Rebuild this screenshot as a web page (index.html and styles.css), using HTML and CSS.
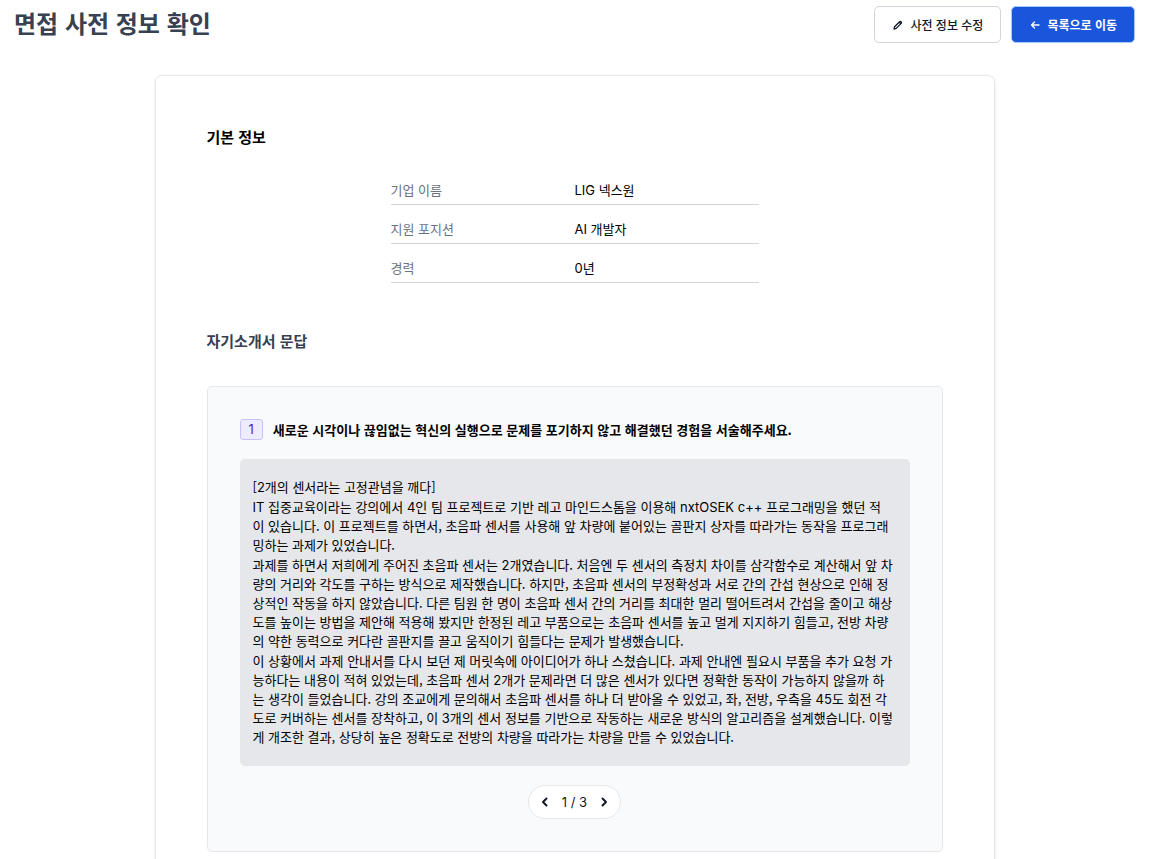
FILE: index.html
```html
<!DOCTYPE html>
<html lang="ko">
<head>
<meta charset="utf-8">
<meta name="viewport" content="width=device-width, initial-scale=1">
<title>면접 사전 정보 확인</title>
<link rel="stylesheet" href="styles.css">
</head>
<body>
<header class="page-header">
  <h1 class="page-title">면접 사전 정보 확인</h1>
  <div class="actions">
    <button type="button" class="btn btn-light">
      <svg class="btn-icon" viewBox="0 0 12 12" aria-hidden="true"><path d="M2 10l.6-2.200 5-5c.5-.5 1.200-.5 1.600 0s.5 1.100 0 1.600l-5 5z M7.200 3.200l1.600 1.600"/></svg>
      사전 정보 수정
    </button>
    <button type="button" class="btn btn-primary">
      <svg class="btn-icon" viewBox="0 0 12 12" aria-hidden="true"><path d="M10 6H2.500M5.500 3L2.500 6l3 3"/></svg>
      목록으로 이동
    </button>
  </div>
</header>
<main class="card">
  <section>
    <h2 class="section-title section-title-dark">기본 정보</h2>
    <table class="info">
      <tbody>
        <tr><th scope="row">기업 이름</th><td><span class="latin">LIG</span> 넥스원</td></tr>
        <tr><th scope="row">지원 포지션</th><td><span class="latin">AI</span> 개발자</td></tr>
        <tr><th scope="row">경력</th><td><span class="latin">0</span>년</td></tr>
      </tbody>
    </table>
  </section>
  <section>
    <h2 class="section-title">자기소개서 문답</h2>
    <article class="qa">
      <div class="question">
        <span class="number">1</span>
        <h3 class="question-text">새로운 시각이나 끊임없는 혁신의 실행으로 문제를 포기하지 않고 해결했던 경험을 서술해주세요.</h3>
      </div>
      <div class="answer">
        <p>[<span class="latin">2</span>개의 센서라는 고정관념을 깨다]</p>
        <p><span class="latin">IT</span> 집중교육이라는 강의에서 <span class="latin">4</span>인 팀 프로젝트로 기반 레고 마인드스톰을 이용해 <span class="latin">nxtOSEK c++</span> 프로그래밍을 했던 적<br>이 있습니다. 이 프로젝트를 하면서, 초음파 센서를 사용해 앞 차량에 붙어있는 골판지 상자를 따라가는 동작을 프로그래<br>밍하는 과제가 있었습니다.</p>
        <p>과제를 하면서 저희에게 주어진 초음파 센서는 <span class="latin">2</span>개였습니다. 처음엔 두 센서의 측정치 차이를 삼각함수로 계산해서 앞 차<br>량의 거리와 각도를 구하는 방식으로 제작했습니다. 하지만, 초음파 센서의 부정확성과 서로 간의 간섭 현상으로 인해 정<br>상적인 작동을 하지 않았습니다. 다른 팀원 한 명이 초음파 센서 간의 거리를 최대한 멀리 떨어트려서 간섭을 줄이고 해상<br>도를 높이는 방법을 제안해 적용해 봤지만 한정된 레고 부품으로는 초음파 센서를 높고 멀게 지지하기 힘들고, 전방 차량<br>의 약한 동력으로 커다란 골판지를 끌고 움직이기 힘들다는 문제가 발생했습니다.</p>
        <p>이 상황에서 과제 안내서를 다시 보던 제 머릿속에 아이디어가 하나 스쳤습니다. 과제 안내엔 필요시 부품을 추가 요청 가<br>능하다는 내용이 적혀 있었는데, 초음파 센서 <span class="latin">2</span>개가 문제라면 더 많은 센서가 있다면 정확한 동작이 가능하지 않을까 하<br>는 생각이 들었습니다. 강의 조교에게 문의해서 초음파 센서를 하나 더 받아올 수 있었고, 좌, 전방, 우측을 <span class="latin">45</span>도 회전 각<br>도로 커버하는 센서를 장착하고, 이 <span class="latin">3</span>개의 센서 정보를 기반으로 작동하는 새로운 방식의 알고리즘을 설계했습니다. 이렇<br>게 개조한 결과, 상당히 높은 정확도로 전방의 차량을 따라가는 차량을 만들 수 있었습니다.</p>
      </div>
      <nav class="pager" aria-label="문답 페이지">
        <button type="button" class="pager-btn" aria-label="이전"><svg viewBox="0 0 12 12" aria-hidden="true"><path d="M7.500 2.500L4 6l3.500 3.500"/></svg></button>
        <span>1 / 3</span>
        <button type="button" class="pager-btn" aria-label="다음"><svg viewBox="0 0 12 12" aria-hidden="true"><path d="M4.500 2.500L8 6l-3.500 3.500"/></svg></button>
      </nav>
    </article>
  </section>
</main>
</body>
</html>
```
FILE: styles.css
```css
* {
  box-sizing: border-box;
}

body {
  margin: 0;
  background: #fff;
  color: #000;
  font-family: "Noto Sans CJK KR", "Noto Sans", sans-serif;
  font-size: 13px;
  line-height: 19px;
}

h1, h2, h3, p {
  margin: 0;
}

button {
  font: inherit;
  cursor: pointer;
}

svg {
  fill: none;
  stroke: currentColor;
  stroke-linecap: round;
  stroke-linejoin: round;
}

/* Latin runs inside Korean text; the short line box keeps the row height even */
.latin {
  font-family: Inter, sans-serif;
  line-height: 1;
}

.page-header {
  display: flex;
  justify-content: space-between;
  align-items: flex-start;
  padding: 6px 14px 0;
}

.page-title {
  color: #374151;
  font-size: 24px;
  line-height: 34px;
}

.actions {
  display: flex;
  gap: 10px;
}

.btn {
  display: flex;
  align-items: center;
  gap: 6px;
  padding: 8px 17px;
  border: 1px solid #d1d5db;
  border-radius: 5px;
  font-size: 12px;
  line-height: 19px;
}

.btn-icon {
  width: 12px;
  height: 12px;
  stroke-width: 1.3;
}

.btn-light {
  background: #fff;
  color: #111827;
  font-weight: 500;
}

.btn-primary {
  background: #1a56db;
  border-color: #a4cafe;
  color: #fff;
  font-weight: 700;
}

.card {
  max-width: 840px;
  margin: 32px auto 26px;
  padding: 51px;
  border: 1px solid #e5e7eb;
  border-radius: 7px;
  box-shadow: 0 1px 3px rgba(0, 0, 0, 0.1);
}

.section-title {
  color: #374151;
  font-size: 15px;
  line-height: 20px;
}

.section-title-dark {
  color: #000;
}

.info {
  width: 50%;
  margin: 19px auto 48px;
  border-collapse: collapse;
  table-layout: fixed;
}

.info th,
.info td {
  padding: 14px 0 5px;
  border-bottom: 1px solid #d1d5db;
  text-align: left;
}

.info th {
  color: #6b7280;
  font-weight: 400;
}

.qa {
  margin-top: 35px;
  padding: 32px;
  border: 1px solid #e5e7eb;
  border-radius: 5px;
  background: #f9fafb;
}

.question {
  display: flex;
  align-items: center;
  gap: 10px;
}

.number {
  padding: 0 8px;
  border: 1px solid #cabffd;
  border-radius: 3px;
  background: #edebfe;
  color: #5521b5;
  font-family: Inter, sans-serif;
}

.question-text {
  font-size: 13px;
}

.answer {
  display: grid;
  gap: 1px;
  margin: 19px 0;
  padding: 18px 13px 20px;
  border-radius: 5px;
  background: #e5e7eb;
  word-break: break-all;
}

.pager {
  display: flex;
  align-items: center;
  gap: 11px;
  width: max-content;
  margin: 0 auto;
  padding: 7px 10px;
  border: 1px solid #e5e7eb;
  border-radius: 17px;
  background: #fff;
  color: #111827;
  font-family: Inter, sans-serif;
  line-height: 18px;
}

.pager-btn {
  display: flex;
  padding: 0;
  border: 0;
  background: none;
  color: inherit;
}

.pager-btn svg {
  width: 12px;
  height: 12px;
  stroke-width: 2;
}
```
